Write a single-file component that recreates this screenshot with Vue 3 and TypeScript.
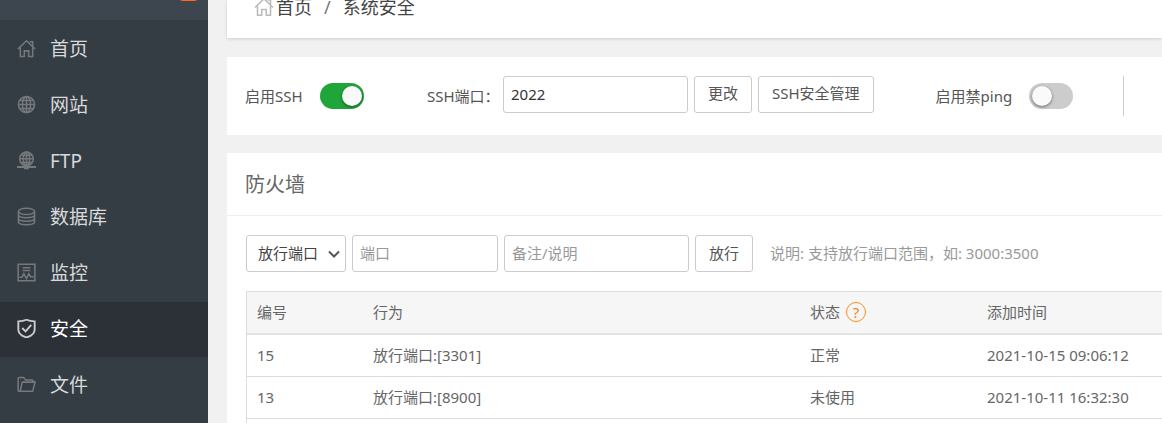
<script setup lang="ts">
import { ref } from 'vue'

interface NavItem {
  label: string
  icon: string
  active?: boolean
}

interface Rule {
  id: number
  action: string
  status: string
  time: string
}

const nav: NavItem[] = [
  { label: '首页', icon: 'home' },
  { label: '网站', icon: 'globe' },
  { label: 'FTP', icon: 'ftp' },
  { label: '数据库', icon: 'database' },
  { label: '监控', icon: 'monitor' },
  { label: '安全', icon: 'shield', active: true },
  { label: '文件', icon: 'folder' },
]

const rules: Rule[] = [
  { id: 15, action: '放行端口:[3301]', status: '正常', time: '2021-10-15 09:06:12' },
  { id: 13, action: '放行端口:[8900]', status: '未使用', time: '2021-10-11 16:32:30' },
]

const sshEnabled = ref(true)
const pingBlocked = ref(false)
const sshPort = ref('2022')
const ruleType = ref('port')
const newPort = ref('')
const remark = ref('')
</script>

<template>
  <div class="page">
    <aside class="sidebar">
      <div class="brand"><span class="badge"></span></div>
      <nav class="menu">
        <a v-for="item in nav" :key="item.label" href="#" class="item" :class="{ active: item.active }">
          <svg class="icon" viewBox="0 0 20 20" aria-hidden="true">
            <g v-if="item.icon === 'home'">
              <path d="M1 10.5 10 1.8l9 8.700M13.500 3h3v4.500M3.500 9v9.300h4.200v-5.800h4.600v5.800h4.200V9" />
            </g>
            <g v-else-if="item.icon === 'globe'">
              <circle cx="10" cy="10" r="8.500" />
              <ellipse cx="10" cy="10" rx="4.300" ry="8.500" />
              <path d="M10 1.500v17M1.500 10h17M3 5.800h14M3 14.200h14" />
            </g>
            <g v-else-if="item.icon === 'ftp'">
              <circle cx="10" cy="8.200" r="7.200" />
              <ellipse cx="10" cy="8.200" rx="3.400" ry="7.200" />
              <path d="M10 1v14M3 8.200h14M4.200 4.500h11.600M4.200 12h11.600" />
              <path d="M0 16.800h20M7.500 18h5" stroke-width="2.200" />
            </g>
            <g v-else-if="item.icon === 'database'">
              <ellipse cx="10" cy="4.600" rx="8.500" ry="3.400" />
              <path d="M1.500 4.600v11c0 4.200 17 4.200 17 0v-11M1.500 8.200c0 4.200 17 4.200 17 0M1.500 11.900c0 4.200 17 4.200 17 0" />
            </g>
            <g v-else-if="item.icon === 'monitor'">
              <path d="M1.200 1.200h17.600v17.600H1.200zM6 5h8M6 7.800h8M2.500 15h2.700l2-3.800 2.800 5.300 2.500-5.300 1.700 3.200h3.300" />
            </g>
            <g v-else-if="item.icon === 'shield'" stroke-width="2">
              <path d="M10 .8C7.500 2 4.500 2.500 1.400 2.500V11c0 4 4 7 8.600 8.500 4.600-1.500 8.600-4.500 8.600-8.500V2.500C15.500 2.500 12.500 2 10 .8z" />
              <path d="m5.500 9.500 3.500 3.600 6-7" />
            </g>
            <g v-else>
              <path d="M3.500 17.200H2.200c-.7 0-1-.5-1-1.200V4c0-.8.4-1.300 1.200-1.300H7l2 2.500h7c.7 0 1 .4 1 1v1.300M3.300 17.200 5.500 7.500h13.500l-2.500 9.700z" />
            </g>
          </svg>
          <span>{{ item.label }}</span>
        </a>
      </nav>
    </aside>

    <main class="main">
      <header class="crumbs">
        <svg class="crumb-icon" viewBox="0 0 20 20" aria-hidden="true">
          <path d="M1 10.500 10 1.800l9 8.700M13.500 3h3v4.500M3.500 9v9.300h4.200v-5.800h4.600v5.800h4.200V9" />
        </svg>
        <a href="#">首页</a>
        <span class="sep">/</span>
        <span>系统安全</span>
      </header>

      <section class="panel settings">
        <div class="field">
          <label for="ssh">启用SSH</label>
          <input id="ssh" v-model="sshEnabled" type="checkbox" class="switch" />
        </div>
        <div class="field port">
          <label for="ssh-port">SSH端口：</label>
          <input id="ssh-port" v-model="sshPort" type="text" class="text wide" />
          <button type="button" class="btn">更改</button>
          <button type="button" class="btn">SSH安全管理</button>
        </div>
        <div class="field ping">
          <label for="ping">启用禁ping</label>
          <input id="ping" v-model="pingBlocked" type="checkbox" class="switch" />
        </div>
        <div class="divider"></div>
      </section>

      <section class="panel firewall">
        <h1>防火墙</h1>
        <form class="tools" @submit.prevent>
          <div class="select">
            <select v-model="ruleType" aria-label="类型">
              <option value="port">放行端口</option>
            </select>
            <svg class="arrow" viewBox="0 0 12 8" aria-hidden="true"><path d="m1 1.500 5 5 5-5" /></svg>
          </div>
          <input v-model="newPort" type="text" class="text" placeholder="端口" aria-label="端口" />
          <input v-model="remark" type="text" class="text wide" placeholder="备注/说明" aria-label="备注/说明" />
          <button type="submit" class="btn">放行</button>
          <span class="hint">说明: 支持放行端口范围，如: 3000:3500</span>
        </form>
        <div class="table-box">
          <table>
            <colgroup>
              <col class="c-id" />
              <col class="c-action" />
              <col class="c-status" />
              <col />
            </colgroup>
            <thead>
              <tr>
                <th>编号</th>
                <th>行为</th>
                <th><div class="status-head">状态<a href="#" class="help">?</a></div></th>
                <th>添加时间</th>
              </tr>
            </thead>
            <tbody>
              <tr v-for="rule in rules" :key="rule.id">
                <td>{{ rule.id }}</td>
                <td>{{ rule.action }}</td>
                <td>{{ rule.status }}</td>
                <td>{{ rule.time }}</td>
              </tr>
            </tbody>
          </table>
        </div>
      </section>
    </main>
  </div>
</template>

<style>
body {
  margin: 0;
  background: #f1f1f1;
}
</style>

<style scoped>
.page {
  display: flex;
  min-height: 100vh;
  overflow: hidden;
  color: #555;
  font: 15px/20px "Noto Sans", "Noto Sans CJK SC", sans-serif;
}

.page * {
  box-sizing: border-box;
}

a {
  color: inherit;
  text-decoration: none;
}

svg {
  fill: none;
  stroke: currentColor;
  stroke-width: 1.6;
}

.sidebar {
  flex: 0 0 208px;
  background: #353d44;
}

.brand {
  position: relative;
  height: 20px;
  background: #3d454e;
}

.badge {
  position: absolute;
  top: -15px;
  left: 179px;
  width: 19px;
  height: 16px;
  border-radius: 4px;
  background: #ff6b1a;
}

.menu {
  display: flex;
  flex-direction: column;
  gap: 1px;
  padding-top: 2px;
}

.item {
  display: flex;
  align-items: center;
  gap: 14px;
  height: 55px;
  padding: 0 0 2px 17px;
  color: #d8d9da;
  font-size: 19px;
}

.item.active {
  background: #2c3138;
  color: #fff;
}

.icon {
  width: 19px;
  height: 19px;
  color: #75797c;
}

.active .icon {
  color: #c9cbcc;
}

.main {
  display: flex;
  flex: 1;
  flex-direction: column;
  min-width: 0;
  padding-left: 19px;
}

.crumbs {
  display: flex;
  align-items: center;
  height: 38px;
  padding: 0 27px 24px;
  background: #fff;
  box-shadow: 0 1px 3px rgba(0, 0, 0, 0.15);
  color: #444;
  font-size: 18px;
  line-height: 14px;
}

.crumb-icon {
  flex: none;
  width: 20px;
  height: 20px;
  margin-right: 2px;
  color: #bbb;
}

.sep {
  margin: 0 12px;
  color: #777;
}

.panel {
  background: #fff;
}

.settings {
  display: flex;
  align-items: center;
  height: 78px;
  margin: 19px 0 18px;
  padding-left: 18px;
  white-space: nowrap;
}

.field {
  display: flex;
  align-items: center;
  gap: 6px;
}

.field label {
  width: 69px;
}

.port {
  margin-left: 63px;
}

.port label {
  width: 70px;
}

.port .text,
.port .btn {
  margin-bottom: 4px;
}

.ping {
  margin-left: 62px;
}

.ping label {
  width: 87px;
}

.divider {
  flex: none;
  width: 1px;
  height: 40px;
  margin-left: 50px;
  background: #ccc;
}

.switch {
  position: relative;
  flex: none;
  width: 44px;
  height: 26px;
  margin: 0;
  border-radius: 13px;
  background: #ccc;
  appearance: none;
}

.switch::before {
  position: absolute;
  top: 3px;
  left: 3px;
  width: 20px;
  height: 20px;
  border-radius: 50%;
  background: #fafafa;
  box-shadow: 0 1px 3px rgba(0, 0, 0, 0.5);
  content: "";
}

.switch:checked {
  background: #20a53a;
}

.switch:checked::before {
  left: 22px;
}

.text,
.btn,
select {
  height: 37px;
  margin: 0;
  border: 1px solid #ccc;
  border-radius: 3px;
  background: #fff;
  font: inherit;
}

.text {
  width: 146px;
  padding: 0 7px 1px;
  color: #333;
}

.text.wide {
  width: 185px;
}

.text::placeholder {
  color: #999;
  opacity: 1;
}

.btn {
  padding: 0 13px 2px;
  color: #555;
}

.firewall {
  display: flex;
  flex: 1;
  flex-direction: column;
}

h1 {
  height: 63px;
  margin: 0;
  padding-left: 18px;
  border-bottom: 1px solid #eee;
  color: #666;
  font-size: 20px;
  font-weight: 400;
  line-height: 64px;
}

.tools {
  display: flex;
  align-items: center;
  gap: 6px;
  padding: 19px 0 19px 19px;
  white-space: nowrap;
}

.select {
  position: relative;
}

select {
  display: block;
  width: 100px;
  padding: 0 11px 2px;
  color: #444;
  appearance: none;
}

.arrow {
  position: absolute;
  top: 15px;
  right: 6px;
  width: 12px;
  height: 8px;
  stroke-width: 2;
  pointer-events: none;
}

.hint {
  margin-left: 11px;
  padding-bottom: 2px;
  color: #999;
}

.table-box {
  flex: 1;
  margin-left: 19px;
  border: 0 solid #ddd;
  border-width: 1px 0 0 1px;
}

table {
  width: 100%;
  border-collapse: separate;
  border-spacing: 0;
  table-layout: fixed;
  color: #666;
}

.c-id {
  width: 116px;
}

.c-action {
  width: 437px;
}

.c-status {
  width: 177px;
}

th,
td {
  height: 42px;
  padding: 0 10px 2px;
  border-bottom: 1px solid #ddd;
  font-weight: 400;
  text-align: left;
}

th {
  height: 43px;
  border-bottom: 2px solid #e3e3e3;
  background: #f6f6f6;
}

.status-head {
  display: flex;
  align-items: center;
  gap: 6px;
}

.help {
  width: 20px;
  height: 20px;
  border: 1px solid #ff8a1a;
  border-radius: 50%;
  color: #f78320;
  line-height: 18px;
  text-align: center;
}
</style>
